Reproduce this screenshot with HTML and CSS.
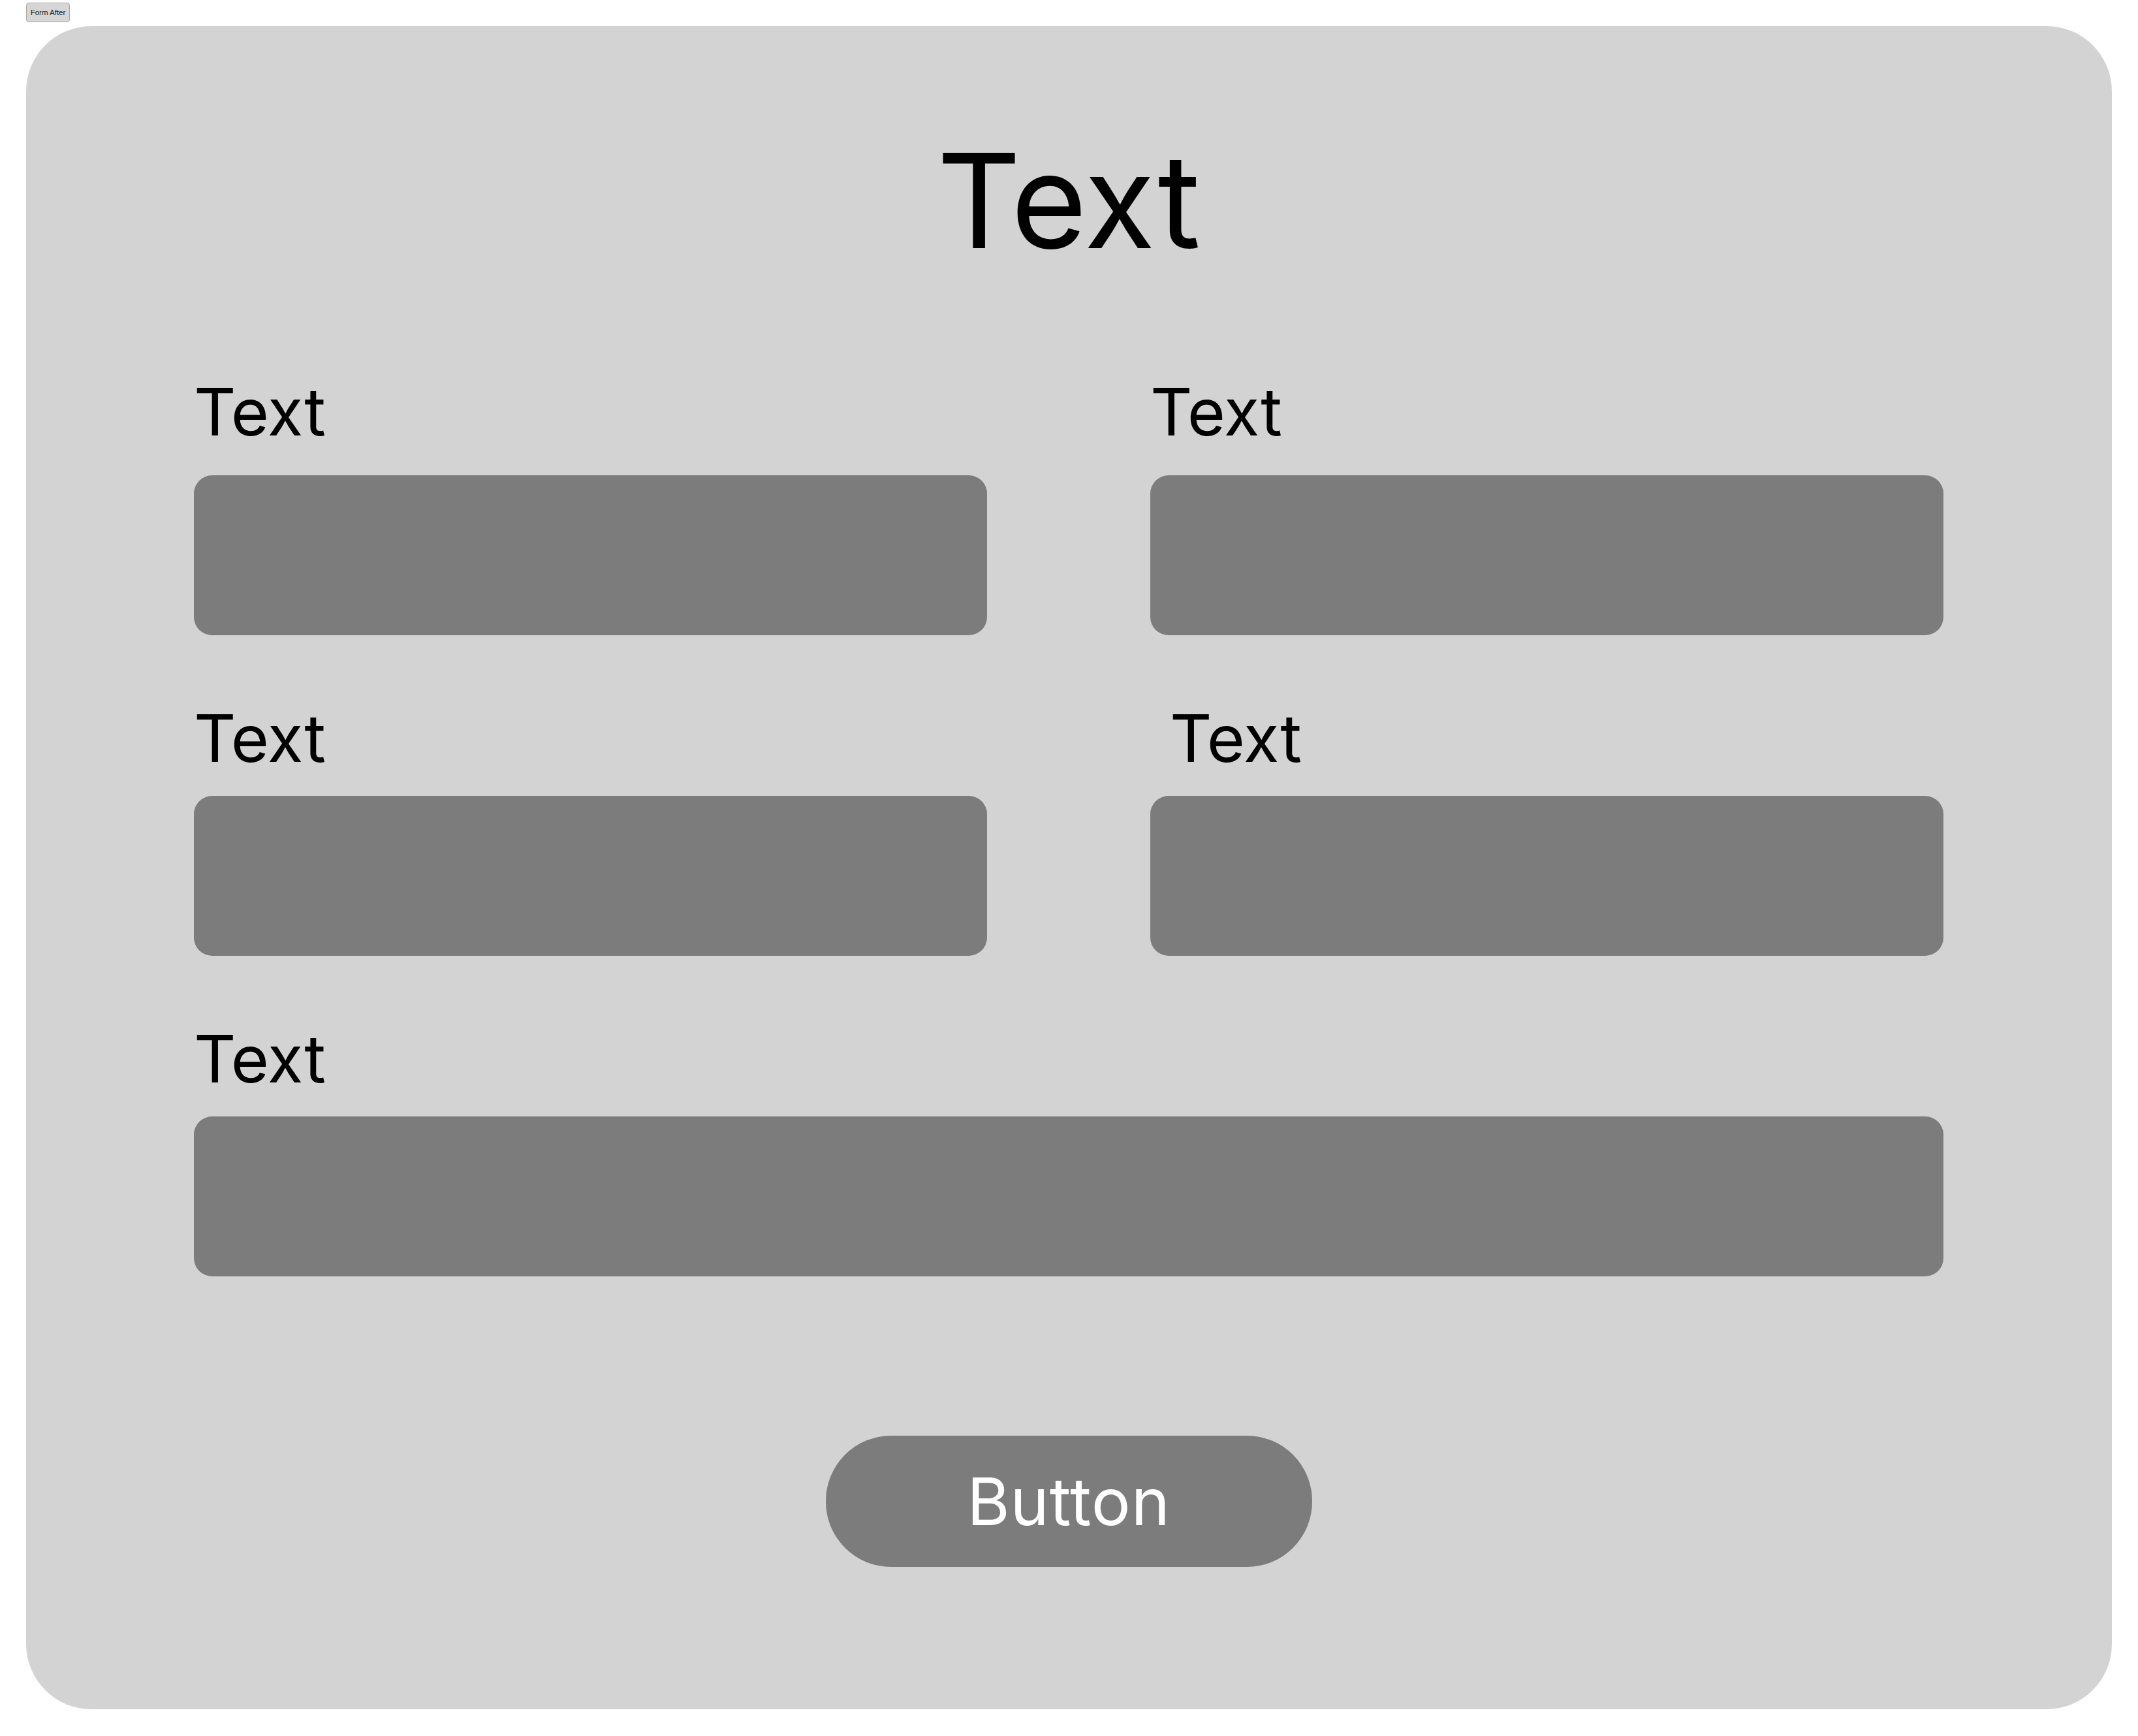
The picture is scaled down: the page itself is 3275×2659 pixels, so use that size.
FILE: index.html
```html
<!DOCTYPE html>
<html lang="en">
<head>
<meta charset="utf-8">
<title>Form After</title>
<link rel="stylesheet" href="styles.css">
</head>
<body>
<div class="topbar">
  <button class="tag-btn" type="button">Form After</button>
</div>
<main class="card">
  <h1 class="title">Text</h1>
  <div class="grid">
    <div class="field first">
      <label class="label">Text</label>
      <div class="input"></div>
    </div>
    <div class="field first">
      <label class="label">Text</label>
      <div class="input"></div>
    </div>
    <div class="field">
      <label class="label">Text</label>
      <div class="input"></div>
    </div>
    <div class="field">
      <label class="label indent">Text</label>
      <div class="input"></div>
    </div>
    <div class="field wide">
      <label class="label">Text</label>
      <div class="input"></div>
    </div>
  </div>
  <div class="actions">
    <button class="main-btn" type="button">Button</button>
  </div>
</main>
</body>
</html>
```

FILE: styles.css
```css
* {
  box-sizing: border-box;
}

html, body {
  margin: 0;
  padding: 0;
  background: #ffffff;
}

body {
  font-family: "Inter", "Liberation Sans", sans-serif;
  color: #000000;
}

.topbar {
  padding: 4px 40px 6px;
  height: 40px;
}

.tag-btn {
  display: block;
  height: 30px;
  width: 67px;
  padding: 0;
  margin: 0;
  font-family: "Liberation Sans", Arial, sans-serif;
  font-size: 11.5px;
  color: #1a1a1a;
  background: #d6d6d6;
  border: 1px solid #a8a8a8;
  border-radius: 4px;
}

.card {
  margin: 0 40px;
  height: 2578px;
  background: #d3d3d3;
  border-radius: 100px;
  padding: 146px 258px 0 257px;
}

.title {
  margin: 0 0 142px;
  font-size: 200px;
  font-weight: 400;
  line-height: 242px;
  text-align: center;
}

.grid {
  display: grid;
  grid-template-columns: 1215px 1215px;
  column-gap: 250px;
  row-gap: 97px;
}

.field {
  display: flex;
  flex-direction: column;
  gap: 28px;
}

.field.first {
  gap: 37px;
}

.field.wide {
  grid-column: 1 / span 2;
}

.label {
  display: block;
  font-size: 100px;
  line-height: 121px;
  height: 121px;
  font-weight: 400;
}

.label.indent {
  padding-left: 30px;
}

.input {
  height: 245px;
  background: #7c7c7c;
  border-radius: 28px;
}

.actions {
  margin-top: 244px;
  display: flex;
  justify-content: center;
}

.main-btn {
  width: 745px;
  height: 201px;
  padding: 0;
  border: none;
  background: #7c7c7c;
  color: #ffffff;
  border-radius: 100px;
  font-family: "Inter", "Liberation Sans", sans-serif;
  font-size: 100px;
  line-height: 121px;
  letter-spacing: 1px;
}
```
